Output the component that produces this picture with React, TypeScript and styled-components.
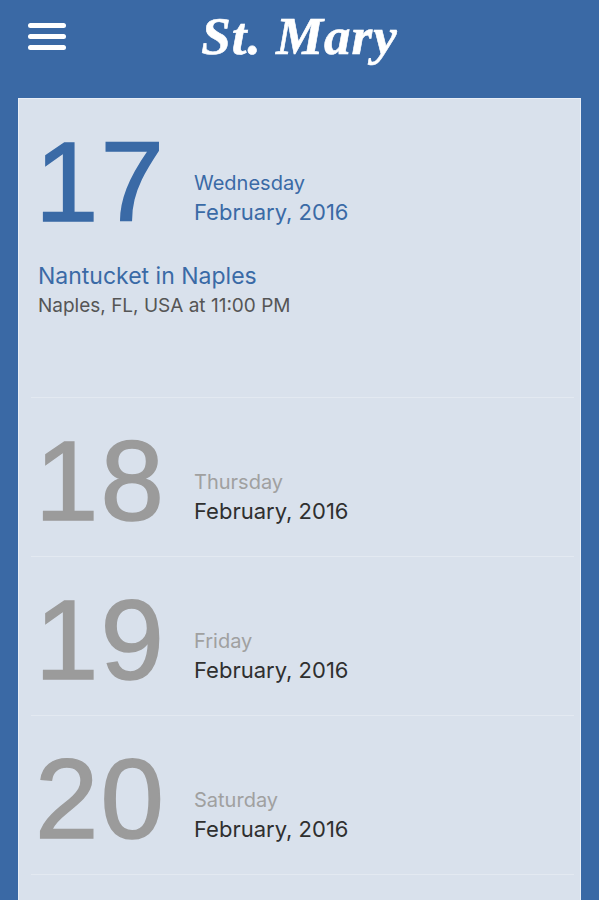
import React from "react";
import styled, { createGlobalStyle } from "styled-components";

const GlobalStyle = createGlobalStyle`
  html, body {
    margin: 0;
    padding: 0;
    background: #3a69a5;
  }
  body {
    font-family: Inter, "Liberation Sans", Arial, sans-serif;
    -webkit-font-smoothing: antialiased;
  }
`;

const Page = styled.div`
  min-height: 100vh;
  display: flex;
  flex-direction: column;
  background: #3a69a5;
`;

const Header = styled.header`
  display: grid;
  grid-template-columns: 1fr auto 1fr;
  align-items: start;
  height: 98px;
  flex: 0 0 98px;
`;

const MenuButton = styled.button`
  justify-self: start;
  display: flex;
  flex-direction: column;
  gap: 6px;
  margin: 23px 0 0 28px;
  padding: 0;
  border: 0;
  background: transparent;
  cursor: pointer;
`;

const MenuBar = styled.span`
  display: block;
  width: 38px;
  height: 5px;
  border-radius: 3px;
  background: #ffffff;
`;

const Title = styled.h1`
  margin: 10px 0 0;
  font-family: "Liberation Serif", "Times New Roman", serif;
  font-style: italic;
  font-weight: 700;
  font-size: 53px;
  line-height: 53px;
  letter-spacing: 1px;
  color: #ffffff;
  -webkit-text-stroke: 0.6px #ffffff;
  white-space: nowrap;
`;

const Card = styled.main`
  flex: 1 1 auto;
  margin: 0 18px;
  background: #d9e1ec;
  border: 1px solid #e8eef7;
  border-bottom: 0;
`;

const Row = styled.section<{ $tall?: boolean }>`
  margin: 0 6px 0 12px;
  padding: 26px 0 ${(p) => (p.$tall ? "79px" : "18px")} 4px;
  border-bottom: 1px solid #e3e9f1;
`;

const DateLine = styled.div`
  display: flex;
  align-items: flex-end;
`;

const DayNumber = styled.div<{ $active?: boolean }>`
  flex: 0 0 159px;
  font-family: "Liberation Sans", Arial, sans-serif;
  font-size: 114px;
  line-height: 114px;
  font-weight: 400;
  letter-spacing: 2px;
  color: ${(p) => (p.$active ? "#3a6aa6" : "#9b9b9b")};
  -webkit-text-stroke: 1.6px ${(p) => (p.$active ? "#3a6aa6" : "#9b9b9b")};
`;

const DateText = styled.div`
  display: flex;
  flex-direction: column;
  gap: 4px;
  margin-bottom: 14px;
`;

const Weekday = styled.div<{ $active?: boolean }>`
  font-size: 20px;
  line-height: 24px;
  color: ${(p) => (p.$active ? "#3a6aa6" : "#a0a0a0")};
`;

const Month = styled.div<{ $active?: boolean }>`
  font-size: 22px;
  line-height: 26px;
  color: ${(p) => (p.$active ? "#3a6aa6" : "#2f2f2f")};
`;

const EventBlock = styled.div`
  display: flex;
  flex-direction: column;
  gap: 4px;
  margin-top: 23px;
  padding-left: 3px;
`;

const EventTitle = styled.div`
  font-size: 23px;
  line-height: 28px;
  color: #3a6aa6;
`;

const EventMeta = styled.div`
  font-size: 19px;
  line-height: 24px;
  color: #555555;
`;

type Day = {
  num: number;
  weekday: string;
  month: string;
  active?: boolean;
  event?: { title: string; meta: string };
};

const days: Day[] = [
  {
    num: 17,
    weekday: "Wednesday",
    month: "February, 2016",
    active: true,
    event: { title: "Nantucket in Naples", meta: "Naples, FL, USA at 11:00 PM" },
  },
  { num: 18, weekday: "Thursday", month: "February, 2016" },
  { num: 19, weekday: "Friday", month: "February, 2016" },
  { num: 20, weekday: "Saturday", month: "February, 2016" },
];

export default function App() {
  return (
    <Page>
      <GlobalStyle />
      <Header>
        <MenuButton aria-label="Menu">
          <MenuBar />
          <MenuBar />
          <MenuBar />
        </MenuButton>
        <Title>St. Mary</Title>
        <div />
      </Header>
      <Card>
        {days.map((d) => (
          <Row key={d.num} $tall={!!d.event}>
            <DateLine>
              <DayNumber $active={d.active}>{d.num}</DayNumber>
              <DateText>
                <Weekday $active={d.active}>{d.weekday}</Weekday>
                <Month $active={d.active}>{d.month}</Month>
              </DateText>
            </DateLine>
            {d.event && (
              <EventBlock>
                <EventTitle>{d.event.title}</EventTitle>
                <EventMeta>{d.event.meta}</EventMeta>
              </EventBlock>
            )}
          </Row>
        ))}
      </Card>
    </Page>
  );
}
